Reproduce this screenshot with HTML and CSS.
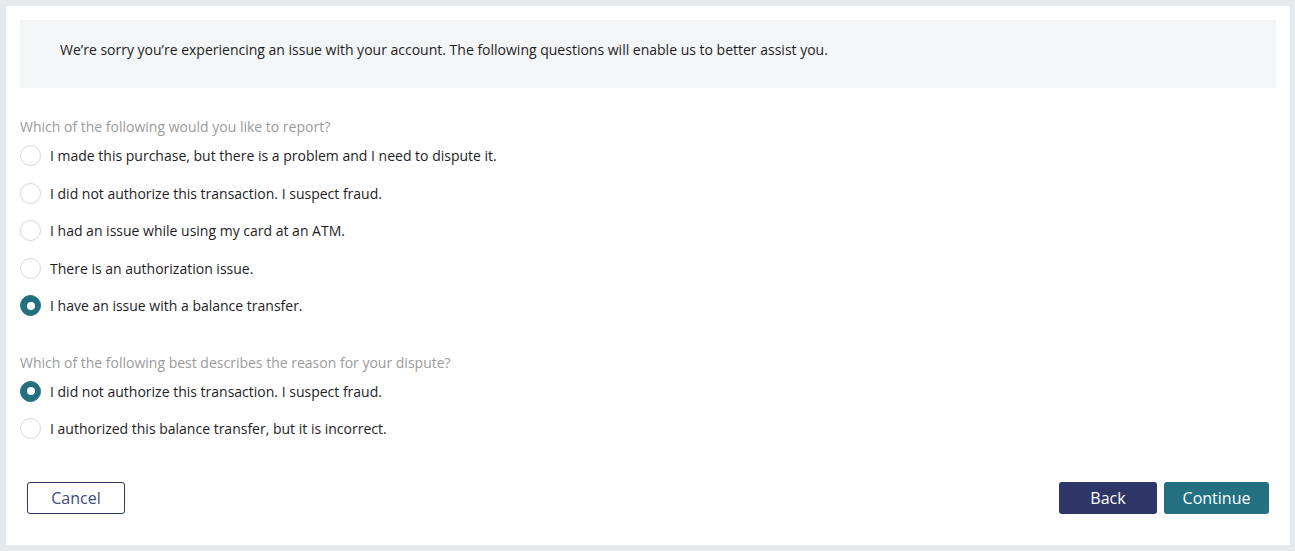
FILE: index.html
```html
<!DOCTYPE html>
<html lang="en">
<head>
  <meta charset="UTF-8" />
  <meta name="viewport" content="width=device-width, initial-scale=1" />
  <title>Report an Issue</title>
  <link rel="stylesheet" href="styles.css">
</head>
<body>
  <div class="card">
    <div class="banner">
      We’re sorry you’re experiencing an issue with your account. The following questions will enable us to better assist you.
    </div>

    <div class="question first">
      <div class="label">Which of the following would you like to report?</div>
      <label class="option"><span class="radio"></span>I made this purchase, but there is a problem and I need to dispute it.</label>
      <label class="option"><span class="radio"></span>I did not authorize this transaction. I suspect fraud.</label>
      <label class="option"><span class="radio"></span>I had an issue while using my card at an ATM.</label>
      <label class="option"><span class="radio"></span>There is an authorization issue.</label>
      <label class="option"><span class="radio checked"></span>I have an issue with a balance transfer.</label>
    </div>

    <div class="question">
      <div class="label">Which of the following best describes the reason for your dispute?</div>
      <label class="option"><span class="radio checked"></span>I did not authorize this transaction. I suspect fraud.</label>
      <label class="option"><span class="radio"></span>I authorized this balance transfer, but it is incorrect.</label>
    </div>

    <div class="actions">
      <button class="btn outline">Cancel</button>
      <div class="right">
        <button class="btn navy">Back</button>
        <button class="btn teal wide">Continue</button>
      </div>
    </div>
  </div>
</body>
</html>
```

FILE: styles.css
```css
body {
  margin: 0;
  padding: 6px 5px 6px 6px;
  background: #e6eaed;
  font-family: "Open Sans", sans-serif;
  color: #1d1d1f;
}

.card {
  background: #ffffff;
  padding: 14px 14px 31px 14px;
  min-height: 494px;
  box-sizing: border-box;
}

.banner {
  background: #f4f5f7;
  height: 68px;
  box-sizing: border-box;
  padding: 20px 40px 0 40px;
  font-size: 14px;
  line-height: 20px;
  color: #1d1d1f;
}

.question {
  margin-top: 28px;
}
.question.first {
  margin-top: 29px;
}

.label {
  font-size: 14px;
  line-height: 20px;
  color: #9b9b9b;
}

.option {
  display: flex;
  align-items: center;
  height: 37.5px;
  font-size: 14px;
  color: #1d1d1f;
  cursor: pointer;
}

.radio {
  width: 19px;
  height: 19px;
  border: 1px solid #d3d6da;
  border-radius: 50%;
  margin-right: 9px;
  box-sizing: content-box;
  background: #ffffff;
  flex-shrink: 0;
}
.radio.checked {
  background: #226f7e;
  border-color: #226f7e;
  position: relative;
}
.radio.checked::after {
  content: "";
  position: absolute;
  left: 5.5px;
  top: 5.5px;
  width: 8px;
  height: 8px;
  border-radius: 50%;
  background: #ffffff;
}

.actions {
  margin-top: 34px;
  padding: 0 7px;
  display: flex;
  justify-content: space-between;
}
.right {
  display: flex;
  gap: 7px;
}

.btn {
  width: 98px;
  height: 32px;
  border-radius: 3px;
  font-family: "Open Sans", sans-serif;
  font-size: 16px;
  cursor: pointer;
  padding: 0;
}
.btn.wide {
  width: 105px;
}
.btn.outline {
  background: #ffffff;
  border: 1px solid #2e3566;
  color: #3c4a80;
}
.btn.navy {
  background: #2e3668;
  border: none;
  color: #ffffff;
}
.btn.teal {
  background: #227080;
  border: none;
  color: #ffffff;
}
```
